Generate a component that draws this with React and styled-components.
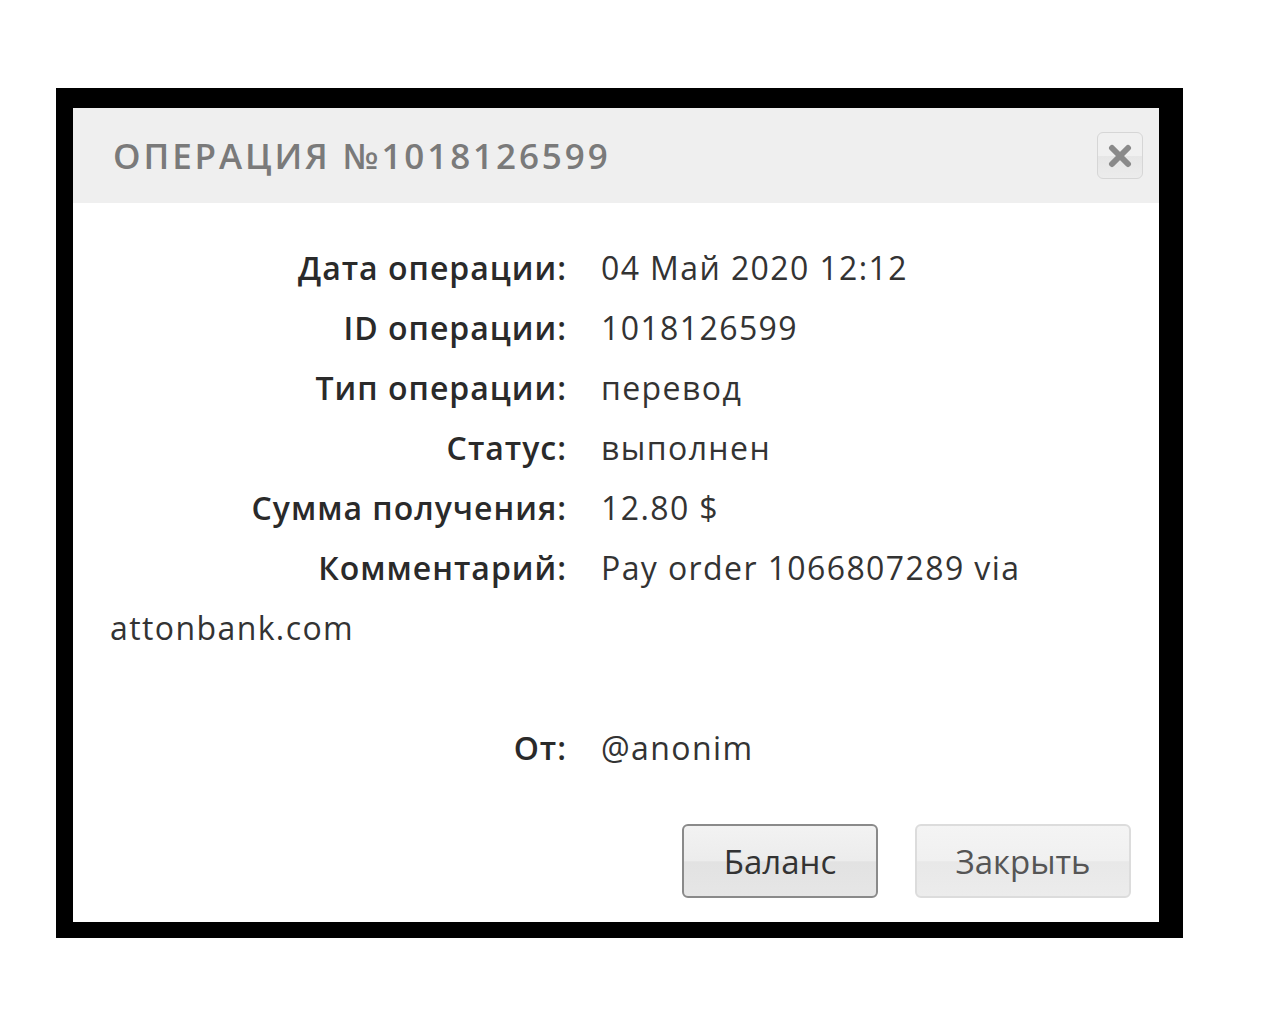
import React from "react";
import styled, { createGlobalStyle } from "styled-components";

const Global = createGlobalStyle`
  html, body { margin: 0; padding: 0; background: #fff; }
  body { font-family: "Open Sans", "Liberation Sans", sans-serif; }
`;

const Page = styled.div`
  width: 1280px;
  height: 1024px;
  padding: 88px 0 0 56px;
  box-sizing: border-box;
`;

const Frame = styled.div`
  width: 1127px;
  height: 850px;
  box-sizing: border-box;
  background: #000;
  padding: 20px 24px 16px 17px;
  display: flex;
`;

const Dialog = styled.div`
  flex: 1;
  background: #fff;
  display: flex;
  flex-direction: column;
`;

const Header = styled.div`
  height: 95px;
  background: #efefef;
  display: flex;
  align-items: center;
  justify-content: space-between;
  padding: 0 16px 0 40px;
`;

const Title = styled.h1`
  margin: 0;
  font-family: "Open Sans", "Liberation Sans", sans-serif;
  font-size: 35px;
  font-weight: 600;
  letter-spacing: 2.9px;
  color: #7a7a7a;
`;

const CloseBtn = styled.button`
  width: 46px;
  height: 47px;
  border: 1px solid #d6d6d6;
  border-radius: 6px;
  background: linear-gradient(#f0f0f0 0%, #f0f0f0 50%, #e6e6e6 51%, #ececec 100%);
  display: flex;
  align-items: center;
  justify-content: center;
  padding: 0;
`;

const Body = styled.div`
  padding: 35px 40px 0 37px;
  font-size: 32px;
  letter-spacing: 1px;
  line-height: 60px;
  color: #333;
`;

const Row = styled.div`
  margin-bottom: ${(p) => p.$gap || 0}px;
`;

const Label = styled.span`
  display: inline-block;
  width: 457px;
  text-align: right;
  font-weight: 600;
  color: #2a2a2a;
  margin-right: 34px;
`;

const Value = styled.span`
  font-weight: 400;
  letter-spacing: 1.4px;
`;

const Footer = styled.div`
  display: flex;
  justify-content: flex-end;
  gap: 37px;
  padding: 46px 28px 0 0;
`;

const Button = styled.button`
  width: ${(p) => p.$w}px;
  height: 74px;
  padding: 0;
  font-family: "Open Sans", "Liberation Sans", sans-serif;
  font-size: 33px;
  color: ${(p) => (p.$primary ? "#333" : "#555")};
  border-radius: 6px;
  border: 2px solid ${(p) => (p.$primary ? "#8a8a8a" : "#dcdcdc")};
  background: ${(p) =>
    p.$primary
      ? "linear-gradient(#f2f2f2 0%, #ececec 50%, #e2e2e2 51%, #e6e6e6 100%)"
      : "linear-gradient(#f4f4f4 0%, #f0f0f0 50%, #e8e8e8 51%, #ececec 100%)"};
`;

const rows = [
  ["Дата операции:", "04 Май 2020 12:12"],
  ["ID операции:", "1018126599"],
  ["Тип операции:", "перевод"],
  ["Статус:", "выполнен"],
  ["Сумма получения:", "12.80 $"],
];

export default function App() {
  return (
    <Page>
      <Global />
      <Frame>
        <Dialog>
          <Header>
            <Title>ОПЕРАЦИЯ №1018126599</Title>
            <CloseBtn aria-label="close">
              <svg width="24" height="24" viewBox="0 0 24 24">
                <path d="M4 4 L20 20 M20 4 L4 20" stroke="#8a8a8a" strokeWidth="6" strokeLinecap="round" />
              </svg>
            </CloseBtn>
          </Header>
          <Body>
            {rows.map(([l, v]) => (
              <Row key={l}>
                <Label>{l}</Label>
                <Value>{v}</Value>
              </Row>
            ))}
            <Row $gap={60}>
              <Label>Комментарий:</Label>
              <Value>Pay order 1066807289 via attonbank.com</Value>
            </Row>
            <Row>
              <Label>От:</Label>
              <Value>@anonim</Value>
            </Row>
          </Body>
          <Footer>
            <Button $primary $w={196}>Баланс</Button>
            <Button $w={216}>Закрыть</Button>
          </Footer>
        </Dialog>
      </Frame>
    </Page>
  );
}
